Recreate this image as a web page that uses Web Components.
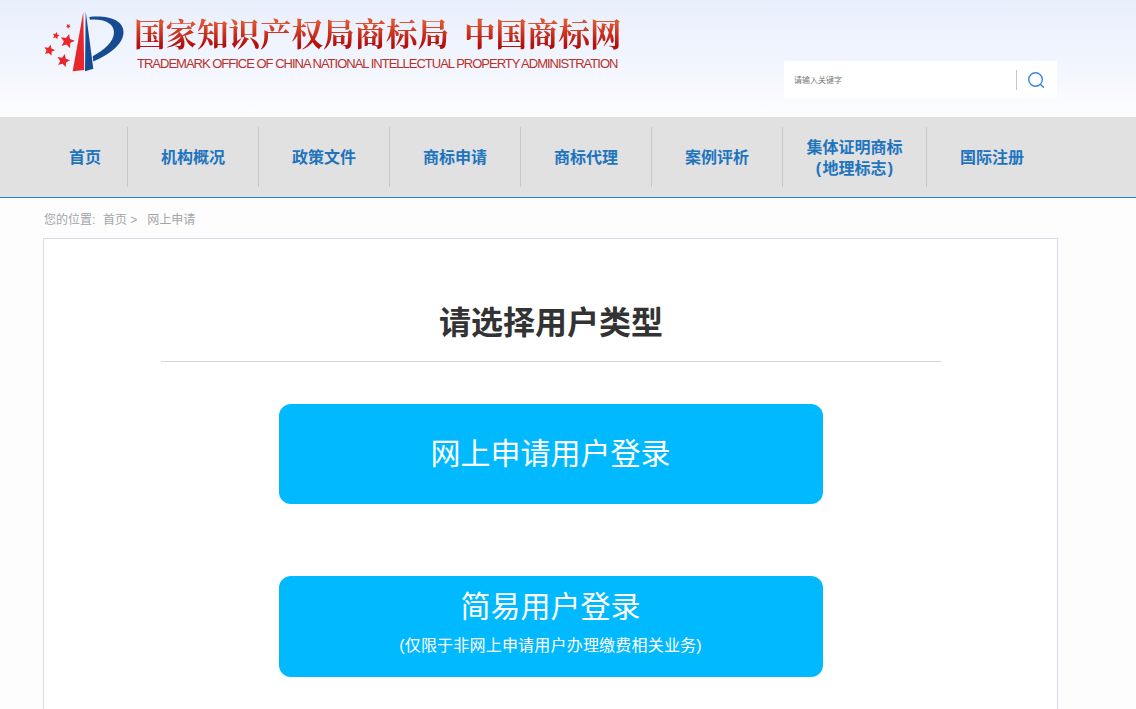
<!DOCTYPE html>
<html lang="zh-CN">
<head>
<meta charset="utf-8">
<title>商标网上申请</title>
<style>
	html { overflow: hidden; }
	body {
		margin: 0;
		background: #fdfdfd;
		font-family: "Liberation Sans", "Noto Sans CJK SC", sans-serif;
	}
</style>
</head>
<body>
<site-header></site-header>
<site-nav>
	<nav-item style="width:84px">首页</nav-item>
	<nav-item>机构概况</nav-item>
	<nav-item>政策文件</nav-item>
	<nav-item>商标申请</nav-item>
	<nav-item>商标代理</nav-item>
	<nav-item>案例评析</nav-item>
	<nav-item style="width:143px">集体证明商标<br>(&#8202;地理标志&#8202;)</nav-item>
	<nav-item last>国际注册</nav-item>
</site-nav>
<bread-crumb></bread-crumb>
<user-card>
	<login-button>网上申请用户登录</login-button>
	<login-button note="(仅限于非网上申请用户办理缴费相关业务)">简易用户登录</login-button>
</user-card>

<script>
// points d'une étoile à 5 branches pour le logo
function star(cx, cy, r, rot) {
	let pts = [];
	for (let i = 0; i < 10; i++) {
		let rad = i % 2 ? r * 0.46 : r;
		let a = (rot - 90 + i * 36) * Math.PI / 180;
		pts.push((cx + rad * Math.cos(a)).toFixed(1) + "," + (cy + rad * Math.sin(a)).toFixed(1));
	}
	return `<polygon points="${pts.join(" ")}"/>`;
}

class SiteHeader extends HTMLElement {
	constructor() {
		super();
		this.shadow = this.attachShadow({ mode: 'open' });
		this.shadow.innerHTML = `
			<style>
				:host {
					display: block;
					height: 117px;
					box-sizing: border-box;
					padding: 0 79px 0 43px;
					background: linear-gradient(#e8effc, #f3f6fe 60%, #fdfdff);
				}
				.wrap {
					display: flex;
					height: 100%;
				}
				svg.logo {
					width: 83px;
					height: 64px;
					margin-top: 10px;
					flex: none;
				}
				.titles {
					margin: 13px 0 0 8px;
					flex: none;
				}
				.cn {
					font-family: "Noto Serif CJK SC", "Noto Sans CJK SC", serif;
					font-size: 31.5px;
					line-height: 40px;
					font-weight: 700;
					white-space: nowrap;
					background: linear-gradient(#de5330 25%, #b30f0d 80%);
					-webkit-background-clip: text;
					background-clip: text;
					color: transparent;
				}
				.cn span { margin-left: 15px; }
				.en {
					font-family: "Liberation Sans", sans-serif;
					font-size: 13px;
					line-height: 16px;
					letter-spacing: -1px;
					color: #b8302a;
					white-space: nowrap;
					margin: 3px 0 0 3px;
				}
				.search {
					margin: 61px 0 0 auto;
					width: 273px;
					height: 37px;
					background: #fff;
					display: flex;
					align-items: center;
					flex: none;
				}
				.ph {
					flex: 1;
					padding-left: 10px;
					font-size: 8px;
					color: #777;
				}
				.btn {
					width: 38px;
					height: 20px;
					padding-right: 2px;
					border-left: 1px solid #c9c9c9;
					display: flex;
					align-items: center;
					justify-content: center;
				}
				.btn svg { width: 18px; height: 18px; }
			</style>
			<div class="wrap">
				<svg class="logo" viewBox="43 10 83 64">
					<g fill="#e8262c">
						${star(67.3, 41.3, 7.5, 14)}
						${star(63.3, 60.7, 6.8, 14)}
						${star(49.3, 50.3, 5.8, 14)}
						${star(56, 35.7, 3.8, 14)}
						${star(68.3, 26.3, 2.6, 40)}
						<polygon points="83.300,12 84.200,70 72.700,71.300"/>
					</g>
					<g fill="#164a91">
						<polygon points="85.700,11.300 93.300,68.700 85,71.300"/>
						<path d="M89.300 17 C108 15 123.500 20 123.500 32 C123.500 45 108 55 93.300 61.500 L92.700 56.300 C104 50 114 42 114 32 C114 23 103 18.500 90 19.700 Z"/>
					</g>
				</svg>
				<div class="titles">
					<div class="cn">国家知识产权局商标局<span>中国商标网</span></div>
					<div class="en">TRADEMARK OFFICE OF CHINA NATIONAL INTELLECTUAL PROPERTY ADMINISTRATION</div>
				</div>
				<div class="search">
					<span class="ph">请输入关键字</span>
					<div class="btn">
						<svg viewBox="0 0 18 18" fill="none" stroke="#3b86dc" stroke-width="1.4" stroke-linecap="round">
							<circle cx="8.500" cy="8.500" r="6.800"/>
							<path d="M13.500 13.500 L16.500 16.300"/>
						</svg>
					</div>
				</div>
			</div>`;
	}
}
customElements.define('site-header', SiteHeader);

class SiteNav extends HTMLElement {
	constructor() {
		super();
		this.attachShadow({ mode: 'open' }).innerHTML = `
			<style>
				:host {
					display: flex;
					height: 80px;
					padding: 0 43px;
					background: #e1e1e2;
					border-bottom: 1px solid #1b87d4;
					align-items: center;
				}
			</style>
			<slot></slot>`;
	}
}
customElements.define('site-nav', SiteNav);

class NavItem extends HTMLElement {
	constructor() {
		super();
		this.attachShadow({ mode: 'open' }).innerHTML = `
			<style>
				:host {
					display: flex;
					width: 130px;
					height: 60px;
					flex: none;
					align-items: center;
					justify-content: center;
					text-align: center;
					border-right: 1px solid #c6c8cb;
					font-size: 16px;
					line-height: 21px;
					font-weight: 700;
					color: #1e74bd;
				}
				:host([last]) { border-right: none; }
				div { padding-top: 1px; }
			</style>
			<div><slot></slot></div>`;
	}
}
customElements.define('nav-item', NavItem);

class BreadCrumb extends HTMLElement {
	constructor() {
		super();
		this.attachShadow({ mode: 'open' }).innerHTML = `
			<style>
				:host {
					display: flex;
					height: 40px;
					padding: 0 44px;
					align-items: center;
					font-size: 12px;
					color: #a3a5a9;
				}
				span { white-space: pre; }
				.home { margin-left: 1px; }
			</style>
			<span>您的位置:  </span><span class="home">首页 &gt;   网上申请</span>`;
	}
}
customElements.define('bread-crumb', BreadCrumb);

class UserCard extends HTMLElement {
	constructor() {
		super();
		this.attachShadow({ mode: 'open' }).innerHTML = `
			<style>
				:host {
					display: block;
					box-sizing: border-box;
					width: 1015px;
					height: 600px;
					margin-left: 43px;
					background: #fff;
					border: 1px solid #d6dce6;
				}
				h1 {
					margin: 61px 116px 0 117px;
					height: 61px;
					font-size: 32px;
					line-height: 46px;
					font-weight: 700;
					color: #333;
					text-align: center;
					border-bottom: 1px solid #d6d6d6;
				}
				.list {
					display: flex;
					flex-direction: column;
					align-items: center;
					gap: 72px;
					margin-top: 42px;
				}
			</style>
			<h1>请选择用户类型</h1>
			<div class="list"><slot></slot></div>`;
	}
}
customElements.define('user-card', UserCard);

class LoginButton extends HTMLElement {
	constructor() {
		super();
		this.attachShadow({ mode: 'open' }).innerHTML = `
			<style>
				:host {
					display: block;
					width: 544px;
				}
				a {
					display: flex;
					flex-direction: column;
					align-items: center;
					justify-content: center;
					height: 100px;
					border-radius: 12px;
					background: #00b9ff;
					color: #fff;
					text-decoration: none;
					font-size: 30px;
					line-height: 46px;
				}
				.note {
					font-size: 16px;
					line-height: 24px;
					letter-spacing: 0.2px;
				}
				.note:empty { display: none; }
				:host([note]) a { height: 101px; justify-content: flex-start; padding-top: 8px; box-sizing: border-box; }
				:host([note]) .note { margin-top: 4px; }
			</style>
			<a href="#"><span><slot></slot></span><span class="note">${this.getAttribute('note') || ''}</span></a>`;
	}
}
customElements.define('login-button', LoginButton);
</script>
</body>
</html>
